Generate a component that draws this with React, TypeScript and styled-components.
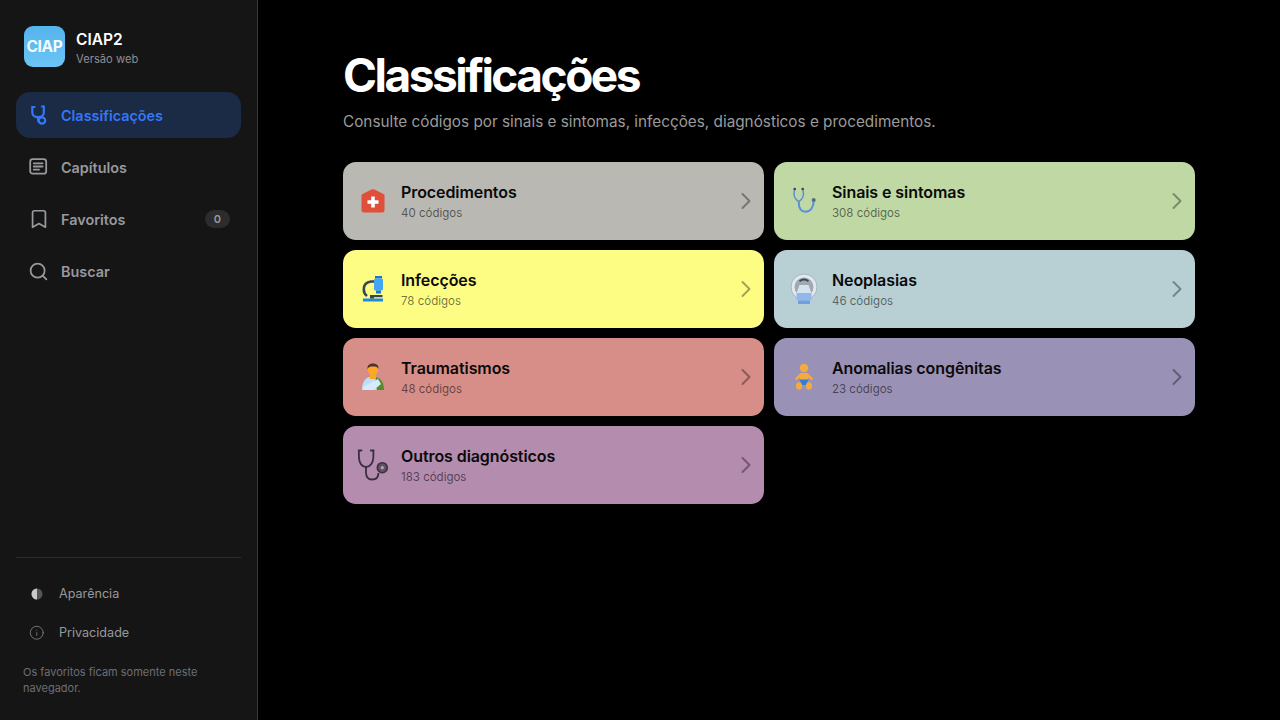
import React from 'react';
import styled, { createGlobalStyle } from 'styled-components';
import { BookmarkIcon, SearchIcon, InfoIcon, ChevronRight } from 'lucide-react';

const GlobalStyle = createGlobalStyle`
  html, body { margin: 0; padding: 0; background: #000; }
  body { font-family: Inter, "Noto Sans", sans-serif; }
  * { box-sizing: border-box; }
`;

const HouseIcon = () => (
  <svg width="24" height="24" viewBox="0 0 24 24">
    <path d="M0.500 6.500a1.500 1.500 0 0 1 .7-1.300L10.500 .6a3 3 0 0 1 3 0l9.300 4.600a1.500 1.500 0 0 1 .7 1.300V21a2.500 2.500 0 0 1-2.500 2.500H3A2.500 2.500 0 0 1 .5 21z" fill="#e04f39" />
    <path d="M10.200 7.500h3.600v3.700h3.700v3.600h-3.700v3.700h-3.600v-3.700H6.500v-3.600h3.700z" fill="#fff" />
  </svg>
);

const MicroscopeIcon = () => (
  <svg width="22" height="28" viewBox="0 0 22 28">
    <path d="M12 6.500H9C4 7 1.800 10.500 1.800 14.500c0 2.500 1 4.800 3.200 6.500" fill="none" stroke="#37474f" strokeWidth="2.600" />
    <rect x="13" y="1" width="7" height="2.500" fill="#1976d2" />
    <rect x="12" y="3.500" width="9" height="12" rx="1.500" fill="#42a5f5" />
    <rect x="14" y="15.500" width="5" height="3" fill="#1976d2" />
    <rect x="10" y="20" width="10.500" height="2.200" fill="#37474f" />
    <path d="M1 26.500v-3h20v3z" fill="#1e88e5" />
    <path d="M8 23.500h4V20H8z" fill="#37474f" />
  </svg>
);

const PatientIcon = () => (
  <svg width="24" height="28" viewBox="0 0 24 28">
    <path d="M1 27c0-8 3-12 8-13h6c4 1 7 5 7 13z" fill="#bbdefb" />
    <path d="M15 14c5 1 8 6 8 13h-7l-2-6z" fill="#558b2f" />
    <rect x="9" y="9" width="6" height="7" fill="#f9a825" />
    <circle cx="12" cy="6.500" r="5.200" fill="#ffa726" />
    <path d="M6.500 6C6 2 9 .5 12 .5s6 1.500 5.500 5.500c-1-2-2.500-2.500-5.500-2.500S7.500 4 6.500 6z" fill="#4e342e" />
    <path d="M2 24 17 16l3 5-7 6H2z" fill="#d6eafb" />
  </svg>
);

const ScopeIcon = () => (
  <svg width="32" height="32" viewBox="0 0 32 32" fill="none">
    <path d="M4.500 1.500H1.800L2 9c.2 5 3 9 7 9s7-4 7.300-9l.2-7.500h-2.700" stroke="#3a2f40" strokeWidth="1.800" strokeLinecap="round" />
    <path d="M9 18v5.500c0 4.500 2.500 7 6 7 4.500 0 6.500-3 6.500-6.500" stroke="#3a2f40" strokeWidth="1.800" />
    <circle cx="25.300" cy="18.700" r="5" fill="#5f5462" stroke="#3a2f40" strokeWidth="1.600" />
    <circle cx="25.300" cy="18.700" r="1.600" fill="#b9a0b5" />
  </svg>
);

const BlueScopeIcon = () => (
  <svg width="26" height="28" viewBox="0 0 26 28" fill="none">
    <path d="M3.500 3c-1.500 6 1.500 10 4.200 11.700C10.500 13 13.500 9 12 3" stroke="#5b8fd8" strokeWidth="1.500" />
    <path d="M7.700 14.700c0 6 2.500 10 7 10 5 0 8-5 8-11" stroke="#5b8fd8" strokeWidth="2" />
    <circle cx="3.700" cy="2" r="1.300" fill="#37474f" />
    <circle cx="11.700" cy="2" r="1.300" fill="#37474f" />
    <circle cx="22.700" cy="13" r="2" fill="#546e7a" />
  </svg>
);

const ScannerIcon = () => (
  <svg width="28" height="32" viewBox="0 0 28 32">
    <circle cx="14" cy="14" r="13" fill="#e3e8ee" stroke="#a9b5c2" strokeWidth="1" />
    <circle cx="14" cy="14" r="9.500" fill="#9fa8b3" />
    <path d="M9 7.500a8 8 0 0 1 10 0l-1 1.500a7 7 0 0 0-8 0z" fill="#37474f" />
    <path d="M9.500 12h9l3 8h-15z" fill="#d7e2ef" />
    <path d="M6.500 20h15v6a1.500 1.500 0 0 1-1.500 1.500H8A1.500 1.500 0 0 1 6.500 26z" fill="#90b8ea" />
    <rect x="8" y="27.500" width="12" height="3.500" fill="#6f9fe0" />
  </svg>
);

const BabyIcon = () => (
  <svg width="20" height="28" viewBox="0 0 20 28">
    <circle cx="10" cy="5" r="4.200" fill="#f5ab3c" />
    <path d="M6.500 10h7l5.500 5.500-1.500 1.700L14 14.500V17H6v-2.500l-3.500 2.700L1 15.500z" fill="#f5ab3c" />
    <path d="M5.500 16.500h9l-2.500 5.500H8z" fill="#2f7fd6" />
    <ellipse cx="5" cy="23" rx="3" ry="3.800" fill="#f5ab3c" />
    <ellipse cx="15" cy="23" rx="3" ry="3.800" fill="#f5ab3c" />
  </svg>
);

const NavStethoscope = () => (
  <svg width="22" height="22" viewBox="0 0 22 22" fill="none" stroke="currentColor" strokeWidth="2.200" strokeLinecap="round">
    <path d="M6.500 3H4.300v5.500c0 2.800 2.300 4.700 5.700 4.700s5.800-1.900 5.800-4.700V2.500" />
    <path d="M10 13.200v2c0 1.800 .6 2.800 1.200 3" />
    <circle cx="14" cy="16.500" r="3.200" />
    <path d="M15.800 2.500h-1.800" />
  </svg>
);

const ChapterIcon = () => (
  <svg width="20" height="20" viewBox="0 0 20 20" fill="none" stroke="currentColor" strokeWidth="1.800" strokeLinecap="round">
    <rect x="1.200" y="2.200" width="16" height="14.500" rx="2.500" />
    <path d="M4.800 6.300h8.800M4.800 9.500h8.800M4.800 12.700h5.200" />
  </svg>
);

const HalfCircle = () => (
  <svg width="12" height="12" viewBox="0 0 12 12">
    <circle cx="6" cy="6" r="5.500" fill="#555" />
    <path d="M6 .5a5.500 5.500 0 0 0 0 11z" fill="#c9c9c9" />
  </svg>
);

const Page = styled.div`
  display: flex;
  width: 100%;
  height: 100vh;
  background: #000;
`;

const Sidebar = styled.aside`
  display: flex;
  flex-direction: column;
  flex: 0 0 258px;
  padding: 26px 16px 24px;
  background: #151516;
  border-right: 1px solid #3a3a3c;
`;

const Brand = styled.div`
  display: flex;
  align-items: center;
  gap: 11px;
  padding-left: 8px;
  margin-bottom: 25px;
`;

const Logo = styled.div`
  display: flex;
  align-items: center;
  justify-content: center;
  width: 41px;
  height: 41px;
  border-radius: 9px;
  background: linear-gradient(180deg, #54b4ec 0%, #6cc5f5 100%);
  color: #f4fbff;
  font-size: 15.500px;
  font-weight: 700;
  letter-spacing: -0.300px;
`;

const BrandText = styled.div`
  display: flex;
  flex-direction: column;
  gap: 2px;
  padding-top: 3px;
`;

const BrandName = styled.div`
  color: #fff;
  font-size: 15.500px;
  font-weight: 600;
  line-height: 20px;
`;

const BrandSub = styled.div`
  color: #8e8e93;
  font-size: 11.200px;
  line-height: 14px;
`;

const Nav = styled.nav`
  display: flex;
  flex-direction: column;
  gap: 6px;
`;

const NavItem = styled.div<{ $active?: boolean }>`
  display: flex;
  align-items: center;
  gap: 12px;
  height: 46px;
  padding: 0 11px 0 12px;
  border-radius: 14px;
  background: ${(p) => (p.$active ? '#1b2a45' : 'transparent')};
  color: ${(p) => (p.$active ? '#3478f6' : '#98989d')};
  font-size: 14.400px;
  font-weight: 600;
`;

const NavIcon = styled.span`
  display: flex;
  align-items: center;
  justify-content: center;
  width: 21px;
  height: 22px;
  flex-shrink: 0;

  svg {
    flex-shrink: 0;
  }
`;

const NavLabel = styled.span`
  flex: 1;
`;

const Badge = styled.span`
  display: flex;
  align-items: center;
  justify-content: center;
  width: 25px;
  height: 18px;
  border-radius: 9px;
  background: #2c2c2e;
  color: #98989d;
  font-size: 11px;
  font-weight: 600;
`;

const SidebarFooter = styled.div`
  display: flex;
  flex-direction: column;
  margin-top: auto;
  padding-top: 16px;
  border-top: 1px solid #2c2c2e;
`;

const FooterItem = styled.div`
  display: flex;
  align-items: center;
  gap: 14.500px;
  height: 39px;
  padding-left: 12.500px;
  color: #98989d;
  font-size: 12.600px;
`;

const FooterIcon = styled.span`
  display: flex;
  align-items: center;
  justify-content: center;
  width: 16px;
  color: #8e8e93;

  svg {
    flex-shrink: 0;
  }
`;

const FooterNote = styled.p`
  margin: 12px 0 0;
  padding: 0 7px;
  color: #6e6e73;
  font-size: 11px;
  line-height: 16px;
`;

const Main = styled.main`
  flex: 1;
  padding: 47px 85px 0;
`;

const Title = styled.h1`
  margin: 0;
  color: #fff;
  font-size: 46px;
  font-weight: 700;
  line-height: 56px;
  letter-spacing: -2.500px;
`;

const Subtitle = styled.p`
  margin: 9px 0 0;
  color: #9b9b9b;
  font-size: 15.300px;
  line-height: 20px;
`;

const Grid = styled.div`
  display: grid;
  grid-template-columns: 1fr 1fr;
  gap: 10px;
  margin-top: 30px;
`;

const Card = styled.div<{ $bg: string }>`
  display: flex;
  align-items: center;
  height: 78px;
  padding: 0 4px 0 12px;
  border-radius: 13px;
  background: ${(p) => p.$bg};
`;

const CardIcon = styled.div`
  display: flex;
  align-items: center;
  justify-content: center;
  width: 36px;
  margin-right: 10px;
`;

const CardText = styled.div`
  display: flex;
  flex: 1;
  flex-direction: column;
  gap: 4px;
`;

const CardTitle = styled.div`
  color: #0a0a0a;
  font-size: 16px;
  font-weight: 600;
  line-height: 20px;
  letter-spacing: -0.080px;
`;

const CardCount = styled.div`
  color: rgba(0, 0, 0, 0.55);
  font-size: 11.500px;
  line-height: 14px;
`;

const Arrow = styled(ChevronRight)`
  color: rgba(0, 0, 0, 0.36);
`;

const cards = [
  { title: 'Procedimentos', count: '40 códigos', bg: '#b9b8b2', icon: <HouseIcon /> },
  { title: 'Sinais e sintomas', count: '308 códigos', bg: '#bfd8a4', icon: <BlueScopeIcon /> },
  { title: 'Infecções', count: '78 códigos', bg: '#fdfd84', icon: <MicroscopeIcon /> },
  { title: 'Neoplasias', count: '46 códigos', bg: '#b8d0d4', icon: <ScannerIcon /> },
  { title: 'Traumatismos', count: '48 códigos', bg: '#d88e88', icon: <PatientIcon /> },
  { title: 'Anomalias congênitas', count: '23 códigos', bg: '#9a92b6', icon: <BabyIcon /> },
  { title: 'Outros diagnósticos', count: '183 códigos', bg: '#b48cae', icon: <ScopeIcon /> },
];

const App: React.FC = () => {
  return (
    <Page>
      <GlobalStyle />
      <Sidebar>
        <Brand>
          <Logo>CIAP</Logo>
          <BrandText>
            <BrandName>CIAP2</BrandName>
            <BrandSub>Versão web</BrandSub>
          </BrandText>
        </Brand>
        <Nav>
          <NavItem $active>
            <NavIcon><NavStethoscope /></NavIcon>
            <NavLabel>Classificações</NavLabel>
          </NavItem>
          <NavItem>
            <NavIcon><ChapterIcon /></NavIcon>
            <NavLabel>Capítulos</NavLabel>
          </NavItem>
          <NavItem>
            <NavIcon><BookmarkIcon size={22} strokeWidth={1.900} /></NavIcon>
            <NavLabel>Favoritos</NavLabel>
            <Badge>0</Badge>
          </NavItem>
          <NavItem>
            <NavIcon><SearchIcon size={21} strokeWidth={2} /></NavIcon>
            <NavLabel>Buscar</NavLabel>
          </NavItem>
        </Nav>
        <SidebarFooter>
          <FooterItem>
            <FooterIcon><HalfCircle /></FooterIcon>
            Aparência
          </FooterItem>
          <FooterItem>
            <FooterIcon><InfoIcon size={15.500} strokeWidth={1.200} /></FooterIcon>
            Privacidade
          </FooterItem>
          <FooterNote>Os favoritos ficam somente neste navegador.</FooterNote>
        </SidebarFooter>
      </Sidebar>
      <Main>
        <Title>Classificações</Title>
        <Subtitle>Consulte códigos por sinais e sintomas, infecções, diagnósticos e procedimentos.</Subtitle>
        <Grid>
          {cards.map((c) => (
            <Card key={c.title} $bg={c.bg}>
              <CardIcon>{c.icon}</CardIcon>
              <CardText>
                <CardTitle>{c.title}</CardTitle>
                <CardCount>{c.count}</CardCount>
              </CardText>
              <Arrow size={28} strokeWidth={1.700} />
            </Card>
          ))}
        </Grid>
      </Main>
    </Page>
  );
};

export default App;
